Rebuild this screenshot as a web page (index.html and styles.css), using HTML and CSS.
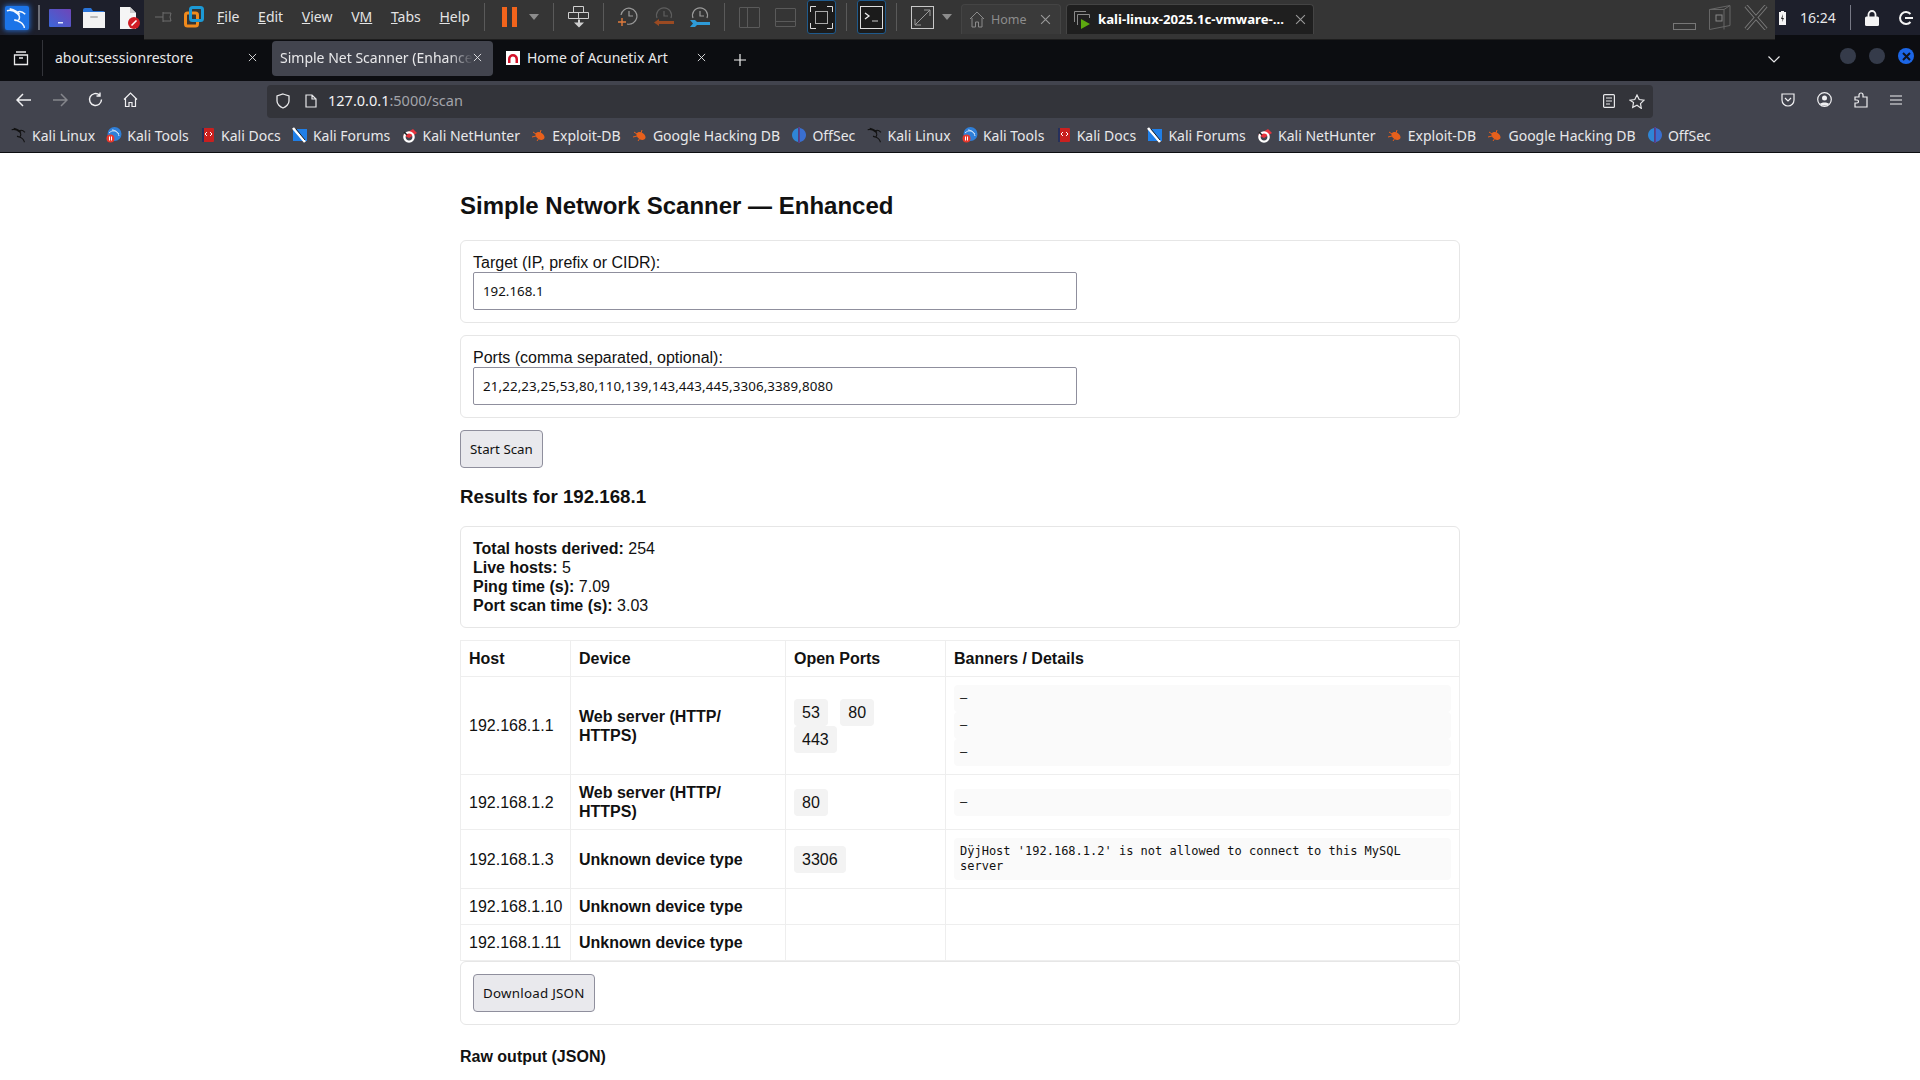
FILE: index.html
```html
<!DOCTYPE html>
<html lang="en">
  <head>
    <meta charset="UTF-8" />
    <title>Simple Net Scanner (Enhanced)</title>
    <link rel="stylesheet" href="styles.css">
  </head>
  <body>
    <svg class="sprites" aria-hidden="true">
      <symbol id="dragon" viewBox="0 0 24 24">
        <path d="M1 4c4-1 8 0 11 3 3 2 3 5 2 7-1 1-3 1-5 0M4 2c4 1 8 2 11 6M9 14c4 1 8 2 10 6 1 1 1 2 1 3M12 6c3-2 6-1 9 2" fill="none" stroke="currentColor" stroke-width="1.6"/>
      </symbol>
      <symbol id="bm-tools" viewBox="0 0 16 16">
        <circle cx="8.5" cy="7" r="7" fill="#2f7fd8"/>
        <path d="M3 6c3-3 7-3 10 1M6 3c3 0 6 2 7 6" fill="none" stroke="#cfe4fa" stroke-width="1"/>
        <circle cx="4.5" cy="11.5" r="4" fill="#e8382c"/>
        <rect x="3" y="9.5" width="1" height="4" fill="#fff"/><rect x="5" y="9.5" width="1" height="4" fill="#fff"/>
      </symbol>
      <symbol id="bm-docs" viewBox="0 0 16 16">
        <rect x="2" y="1" width="12" height="14" rx="1" fill="#c9201f"/>
        <rect x="2" y="1" width="2" height="14" fill="#26305c"/>
        <path d="M7 5l-2 2 2 2M10 5l2 2-2 2" fill="none" stroke="#fff" stroke-width="1"/>
      </symbol>
      <symbol id="bm-forums" viewBox="0 0 16 16">
        <rect x="1" y="2" width="14" height="12" fill="#1f7fe8"/>
        <path d="M1 1l12 14" stroke="#fff" stroke-width="2.6"/>
        <path d="M4 2l9 11" stroke="#222" stroke-width="1"/>
      </symbol>
      <symbol id="bm-hunter" viewBox="0 0 16 16">
        <path d="M1 8l10-6 4 4-8 5z" fill="#e5333c"/>
        <circle cx="7" cy="10" r="4.6" fill="none" stroke="#fff" stroke-width="2.4"/>
        <path d="M2 5l3 3" stroke="#222" stroke-width="1.4"/>
      </symbol>
      <symbol id="bm-exploit" viewBox="0 0 16 16">
        <ellipse cx="9" cy="9" rx="5" ry="3.4" transform="rotate(35 9 9)" fill="#e8601c"/>
        <path d="M2 5l3 2M1 10l4-1M6 14l2-3M10 3l-1 3" stroke="#e8601c" stroke-width="1"/>
      </symbol>
      <symbol id="bm-offsec" viewBox="0 0 16 16">
        <path d="M7 1C3 2 1 5 1 8s2 6 6 7z" fill="#2f86d6"/>
        <path d="M9 1c4 1 6 4 6 7s-2 6-6 7z" fill="#3a6fd0"/>
        <path d="M7.6 0h1v16h-1z" fill="#6b3fc4"/>
      </symbol>
      <symbol id="close" viewBox="0 0 10 10">
        <path d="M1 1l8 8M9 1l-8 8" fill="none" stroke="currentColor" stroke-width="1"/>
      </symbol>
      <symbol id="caret" viewBox="0 0 10 6">
        <path d="M0 0h10L5 6z" fill="currentColor"/>
      </symbol>
    </svg>

    <!-- desktop panel + vmware toolbar -->
    <header class="topbar">
      <div class="panel">
        <div class="panel__kali">
          <svg width="22" height="22"><use href="#dragon"/></svg>
        </div>
        <span class="panel__sep"></span>
        <svg class="panel__app" width="22" height="18" viewBox="0 0 22 18">
          <defs><linearGradient id="term" x1="0" y1="1" x2="1" y2="0"><stop offset="0" stop-color="#3c67d8"/><stop offset="1" stop-color="#6f45b8"/></linearGradient></defs>
          <rect width="22" height="18" rx="1" fill="url(#term)"/>
          <rect x="9" y="13" width="5" height="1.5" fill="#dfe6ff"/>
        </svg>
        <svg class="panel__app" width="22" height="20" viewBox="0 0 22 20">
          <path d="M0 2q0-2 2-2h6l2 3h10q2 0 2 2v2H0z" fill="#2a74d8"/>
          <rect y="4" width="22" height="16" fill="#f2f2f2"/>
          <rect x="7" y="8" width="8" height="2" rx="1" fill="#bbb"/>
        </svg>
        <svg class="panel__doc" width="22" height="24" viewBox="0 0 22 24">
          <path d="M1 1h10l6 6v16H1z" fill="#f5f5f5"/>
          <path d="M11 1l6 6h-6z" fill="#ccc"/>
          <circle cx="15" cy="17" r="6" fill="#d01c24"/>
          <path d="M12.5 19.5l5-5" stroke="#fff" stroke-width="1.6"/>
        </svg>
      </div>

      <div class="vm">
        <svg class="vm__pin" width="19" height="14" viewBox="0 0 19 14">
          <path d="M0 7h8M8 2v10M8 3h8l-1 4 1 4H8" fill="none" stroke="#6d6d6d" stroke-width="1"/>
        </svg>
        <svg class="vm__logo" width="20" height="22" viewBox="0 0 20 22">
          <rect x="1.5" y="7" width="12" height="13" rx="2" fill="none" stroke="#f08a1c" stroke-width="3"/>
          <rect x="6.5" y="1.5" width="12" height="13" rx="2" fill="none" stroke="#1c9ad6" stroke-width="3"/>
        </svg>
        <nav class="vm__menu">
          <span><u>F</u>ile</span>
          <span><u>E</u>dit</span>
          <span><u>V</u>iew</span>
          <span>V<u>M</u></span>
          <span><u>T</u>abs</span>
          <span><u>H</u>elp</span>
        </nav>
        <span class="vm__sep"></span>
        <div class="vm__group vm__group--pause">
          <div class="pause"><i></i><i></i></div>
          <svg class="caret" width="10" height="6"><use href="#caret"/></svg>
        </div>
        <span class="vm__sep"></span>
        <svg width="21" height="22" viewBox="0 0 21 22">
          <path d="M5.500.5h10v6h-10zM.5 6.500h20v6H.5zM10.500 6.500v6" fill="none" stroke="#cfcfcf" stroke-width="1"/>
          <path d="M12 13.500v3h4l-5 5-5-5h4v-3z" fill="#cfcfcf"/>
        </svg>
        <span class="vm__sep"></span>
        <div class="vm__group vm__group--clocks">
          <svg width="20" height="22" viewBox="0 0 20 22">
            <path d="M3 9a8 8 0 1 1 6 9" fill="none" stroke="#9a9a9a" stroke-width="1.2"/>
            <path d="M11 5v5h4" fill="none" stroke="#9a9a9a" stroke-width="1.2"/>
            <path d="M4 12v8M0 16h8" stroke="#e07b3c" stroke-width="1.4"/>
          </svg>
          <svg width="20" height="22" viewBox="0 0 20 22">
            <path d="M3 12a7.500 7.500 0 1 1 14 0" fill="none" stroke="#5e5e5e" stroke-width="1.2"/>
            <path d="M10 5v5h4" fill="none" stroke="#5e5e5e" stroke-width="1.2"/>
            <path d="M5 13v2h15v3H5v2l-5-3.500z" fill="#9a4a22"/>
          </svg>
          <svg width="20" height="22" viewBox="0 0 20 22">
            <path d="M3 12a7.500 7.500 0 1 1 14 0" fill="none" stroke="#9a9a9a" stroke-width="1.2"/>
            <path d="M10 5v5h4" fill="none" stroke="#9a9a9a" stroke-width="1.2"/>
            <path d="M0 14h5l2 2h13v3H7l-2 2H0l3-3.500z" fill="#2e9bd8"/>
          </svg>
        </div>
        <span class="vm__sep"></span>
        <div class="vm__group vm__group--split">
          <svg width="21" height="21" viewBox="0 0 21 21"><path d="M1 .5h19a.5.5 0 0 1 .5.5v19a.5.5 0 0 1-.5.5H1a.5.5 0 0 1-.5-.5V1A.5.5 0 0 1 1 .5zM8.500 1v19" fill="none" stroke="#5a5a5a"/></svg>
          <svg width="21" height="19" viewBox="0 0 21 19"><path d="M1 .5h19a.5.5 0 0 1 .5.5v17a.5.5 0 0 1-.5.5H1a.5.5 0 0 1-.5-.5V1A.5.5 0 0 1 1 .5zM1 13.500h19" fill="none" stroke="#5a5a5a"/></svg>
          <div class="vm__btn">
            <svg width="23" height="23" viewBox="0 0 23 23"><path d="M6 .5H.5V6M17 .5h5.500V6M6 22.500H.5V17M17 22.500h5.500V17" fill="none" stroke="#ddd"/><rect x="5.500" y="5.500" width="12" height="12" fill="none" stroke="#aaa"/></svg>
          </div>
        </div>
        <span class="vm__sep vm__sep--tight"></span>
        <div class="vm__btn">
          <svg width="23" height="23" viewBox="0 0 23 23"><rect x=".5" y=".5" width="22" height="22" fill="none" stroke="#ddd"/><path d="M5 7l4 3-4 3" fill="none" stroke="#eee" stroke-width="1.3"/><path d="M12 15h6" stroke="#ccc"/></svg>
        </div>
        <span class="vm__sep vm__sep--tight"></span>
        <div class="vm__group vm__group--stretch">
          <svg width="23" height="23" viewBox="0 0 23 23"><rect x=".5" y=".5" width="22" height="22" fill="none" stroke="#c8c8c8"/><path d="M4 19L19 4M13 4h6v6M4 13v6h6" fill="none" stroke="#9a9a9a"/></svg>
          <svg class="caret" width="10" height="6"><use href="#caret"/></svg>
        </div>
        <div class="vm__tabs">
          <div class="vm-tab">
            <svg width="16" height="17" viewBox="0 0 16 17"><path d="M1 8l7-7 7 7M3 7v9h3.500v-5h3v5H13V7" fill="none" stroke="#8a8a8a"/></svg>
            <span class="vm-tab__name">Home</span>
            <svg class="vm-tab__x" width="11" height="11"><use href="#close"/></svg>
          </div>
          <div class="vm-tab vm-tab--active">
            <svg width="18" height="18" viewBox="0 0 18 18"><path d="M.5 11V.5H12M3.500 14V3.500H15.500V7" fill="none" stroke="#8a8a8a"/><path d="M7 8l9 5-9 5z" fill="#5da810"/></svg>
            <span class="vm-tab__name">kali-linux-2025.1c-vmware-...</span>
            <svg class="vm-tab__x" width="11" height="11"><use href="#close"/></svg>
          </div>
        </div>
        <div class="vm__win">
          <svg width="23" height="7" viewBox="0 0 23 7"><rect x=".5" y=".5" width="22" height="6" fill="none" stroke="#777"/></svg>
          <svg width="22" height="25" viewBox="0 0 22 25"><path d="M.5 4.500L21 .5v20l-20.500 4zM.5 4.500L15 4.500 21 .5M15 4.500v20" fill="none" stroke="#666"/><rect x="7" y="10" width="6" height="6" fill="none" stroke="#888"/></svg>
          <svg width="24" height="25" viewBox="0 0 24 25"><path d="M2 1l20 23M22 1L2 24" fill="none" stroke="#7a7a7a" stroke-width="4"/><path d="M2 1l20 23M22 1L2 24" fill="none" stroke="#353535" stroke-width="2"/></svg>
        </div>
      </div>

      <div class="tray">
        <svg width="7" height="14" viewBox="0 0 7 14"><path d="M2 0h3v1h2v13H0V1h2z" fill="#f4f4f4"/><path d="M4 3L2 8h1.500L3 11l2-4H3.500z" fill="#222"/></svg>
        <span class="tray__clock">16:24</span>
        <span class="tray__sep"></span>
        <svg width="14" height="16" viewBox="0 0 14 16"><path d="M3.500 7V4.500a3.500 3.500 0 0 1 7 0V7" fill="none" stroke="#f4f4f4" stroke-width="1.800"/><rect y="6.500" width="14" height="9.500" rx="1.500" fill="#f4f4f4"/></svg>
        <svg width="14" height="14" viewBox="0 0 14 14"><path d="M11.500 3a6 6 0 1 0 0 8" fill="none" stroke="#f4f4f4" stroke-width="2"/><path d="M6 7h8" stroke="#f4f4f4" stroke-width="2"/></svg>
      </div>
    </header>

    <!-- firefox tabs -->
    <div class="tabstrip">
      <div class="tabstrip__view">
        <svg width="16" height="16" viewBox="0 0 16 16"><path d="M3 2h10M1.500 5h13v9.500h-13zM6 8h4" fill="none" stroke="#e8e8ea" stroke-width="1.300"/></svg>
      </div>
      <div class="tab tab--first">
        <span class="tab__name">about:sessionrestore</span>
        <svg class="tab__x" width="9" height="9"><use href="#close"/></svg>
      </div>
      <div class="tab tab--active">
        <span class="tab__name">Simple Net Scanner (Enhance</span>
        <svg class="tab__x" width="9" height="9"><use href="#close"/></svg>
      </div>
      <div class="tab tab--third">
        <svg width="14" height="14" viewBox="0 0 14 14"><rect width="14" height="14" fill="#fff"/><path d="M2 12V8a5 5 0 0 1 10 0v4H9.500V8a2.500 2.500 0 0 0-5 0v4z" fill="#d3122a"/></svg>
        <span class="tab__name">Home of Acunetix Art</span>
        <svg class="tab__x" width="9" height="9"><use href="#close"/></svg>
      </div>
      <svg class="tabstrip__plus" width="12" height="12" viewBox="0 0 12 12"><path d="M6 0v12M0 6h12" stroke="#f0f0f0" stroke-width="1.200"/></svg>
      <svg class="tabstrip__more" width="12" height="7" viewBox="0 0 12 7"><path d="M.5.500L6 6 11.500.5" fill="none" stroke="#e8e8ea" stroke-width="1.200"/></svg>
      <div class="wm">
        <span class="wm__dot"></span>
        <span class="wm__dot"></span>
        <span class="wm__dot wm__dot--close">
          <svg width="9" height="9" viewBox="0 0 9 9"><path d="M1 1l7 7M8 1L1 8" stroke="#10131c" stroke-width="2"/></svg>
        </span>
      </div>
    </div>

    <!-- firefox nav bar -->
    <div class="navbar">
      <div class="navbar__btns">
        <svg width="16" height="14" viewBox="0 0 16 14"><path d="M7 1L1 7l6 6M1 7h14" fill="none" stroke="#f0f0f2" stroke-width="1.500"/></svg>
        <svg width="16" height="14" viewBox="0 0 16 14"><path d="M9 1l6 6-6 6M15 7H1" fill="none" stroke="#85868c" stroke-width="1.500"/></svg>
        <svg width="15" height="15" viewBox="0 0 15 15"><path d="M13.500 7.500a6 6 0 1 1-2-4.500M12 .5V4H8.500" fill="none" stroke="#f0f0f2" stroke-width="1.400"/></svg>
        <svg width="15" height="15" viewBox="0 0 15 15"><path d="M1 7.500L7.500 1 14 7.500M2.500 6.500v8h3.500v-4h3v4h3.500v-8" fill="none" stroke="#f0f0f2" stroke-width="1.200"/></svg>
      </div>
      <div class="urlbar">
        <svg width="14" height="16" viewBox="0 0 14 16"><path d="M7 1l6 2v5c0 3-3 6-6 7-3-1-6-4-6-7V3z" fill="none" stroke="#e8e8ea" stroke-width="1.300"/></svg>
        <svg class="urlbar__page" width="12" height="14" viewBox="0 0 12 14"><path d="M1 1h6l4 4v8H1zM7 1v4h4" fill="none" stroke="#e8e8ea" stroke-width="1.200"/></svg>
        <span class="urlbar__text">127.0.0.1<span class="urlbar__dim">:5000/scan</span></span>
        <svg class="urlbar__reader" width="12" height="14" viewBox="0 0 12 14"><rect x=".6" y=".6" width="10.800" height="12.800" rx="1" fill="none" stroke="#e8e8ea" stroke-width="1.200"/><path d="M3 4h6M3 7h6M3 10h4" stroke="#e8e8ea"/></svg>
        <svg width="16" height="15" viewBox="0 0 16 15"><path d="M8 1l2.200 4.500 4.800.7-3.500 3.400.8 4.800L8 11.200l-4.300 2.200.8-4.800L1 6.200l4.800-.7z" fill="none" stroke="#e8e8ea" stroke-width="1.200"/></svg>
      </div>
      <div class="navbar__tools">
        <svg width="14" height="14" viewBox="0 0 14 14"><path d="M1 1h12v6a6 6 0 0 1-12 0z" fill="none" stroke="#f0f0f2" stroke-width="1.200"/><path d="M4 5l3 3 3-3" fill="none" stroke="#f0f0f2" stroke-width="1.200"/></svg>
        <svg width="15" height="15" viewBox="0 0 15 15"><circle cx="7.500" cy="7.500" r="6.800" fill="none" stroke="#f0f0f2" stroke-width="1.200"/><circle cx="7.500" cy="6" r="2.500" fill="#f0f0f2"/><path d="M3 12c1-2 8-2 9 0-2 2-7 2-9 0z" fill="#f0f0f2"/></svg>
        <svg width="14" height="16" viewBox="0 0 14 16"><path d="M1 5h4V3a2 2 0 0 1 4 0v2h4v10H1v-4h2a1.500 1.500 0 0 0 0-3H1z" fill="none" stroke="#f0f0f2" stroke-width="1.200"/></svg>
        <svg width="12" height="10" viewBox="0 0 12 10"><path d="M0 1h12M0 5h12M0 9h12" stroke="#f0f0f2" stroke-width="1.200"/></svg>
      </div>
    </div>

    <!-- bookmarks -->
    <div class="bookmarks">
      <span class="bm"><svg class="bm__dark" width="16" height="16"><use href="#dragon"/></svg>Kali Linux</span>
      <span class="bm"><svg width="16" height="16"><use href="#bm-tools"/></svg>Kali Tools</span>
      <span class="bm"><svg width="16" height="16"><use href="#bm-docs"/></svg>Kali Docs</span>
      <span class="bm"><svg width="16" height="16"><use href="#bm-forums"/></svg>Kali Forums</span>
      <span class="bm"><svg width="16" height="16"><use href="#bm-hunter"/></svg>Kali NetHunter</span>
      <span class="bm"><svg width="16" height="16"><use href="#bm-exploit"/></svg>Exploit-DB</span>
      <span class="bm"><svg width="16" height="16"><use href="#bm-exploit"/></svg>Google Hacking DB</span>
      <span class="bm"><svg width="16" height="16"><use href="#bm-offsec"/></svg>OffSec</span>
      <span class="bm"><svg class="bm__dark" width="16" height="16"><use href="#dragon"/></svg>Kali Linux</span>
      <span class="bm"><svg width="16" height="16"><use href="#bm-tools"/></svg>Kali Tools</span>
      <span class="bm"><svg width="16" height="16"><use href="#bm-docs"/></svg>Kali Docs</span>
      <span class="bm"><svg width="16" height="16"><use href="#bm-forums"/></svg>Kali Forums</span>
      <span class="bm"><svg width="16" height="16"><use href="#bm-hunter"/></svg>Kali NetHunter</span>
      <span class="bm"><svg width="16" height="16"><use href="#bm-exploit"/></svg>Exploit-DB</span>
      <span class="bm"><svg width="16" height="16"><use href="#bm-exploit"/></svg>Google Hacking DB</span>
      <span class="bm"><svg width="16" height="16"><use href="#bm-offsec"/></svg>OffSec</span>
    </div>

    <!-- the scanner page -->
    <main class="page">
      <h1>Simple Network Scanner — Enhanced</h1>
      <form>
        <div class="card">
          <label for="target">Target (IP, prefix or CIDR):</label>
          <input id="target" class="field" type="text" value="192.168.1">
        </div>
        <div class="card">
          <label for="ports">Ports (comma separated, optional):</label>
          <input id="ports" class="field field--ports" type="text" value="21,22,23,25,53,80,110,139,143,443,445,3306,3389,8080">
        </div>
        <button class="btn" type="button">Start Scan</button>
      </form>

      <h3>Results for 192.168.1</h3>
      <div class="card">
        <div><strong>Total hosts derived:</strong> 254</div>
        <div><strong>Live hosts:</strong> 5</div>
        <div><strong>Ping time (s):</strong> 7.09</div>
        <div><strong>Port scan time (s):</strong> 3.03</div>
      </div>

      <table class="results">
        <colgroup>
          <col class="results__host">
          <col class="results__device">
          <col class="results__ports">
          <col>
        </colgroup>
        <thead>
          <tr><th>Host</th><th>Device</th><th>Open Ports</th><th>Banners / Details</th></tr>
        </thead>
        <tbody>
          <tr>
            <td>192.168.1.1</td>
            <td><strong>Web server (HTTP/<br>HTTPS)</strong></td>
            <td><span class="port">53</span> <span class="port">80</span> <span class="port">443</span></td>
            <td><pre>–</pre><pre>–</pre><pre>–</pre></td>
          </tr>
          <tr>
            <td>192.168.1.2</td>
            <td><strong>Web server (HTTP/<br>HTTPS)</strong></td>
            <td><span class="port">80</span></td>
            <td><pre>–</pre></td>
          </tr>
          <tr>
            <td>192.168.1.3</td>
            <td><strong>Unknown device type</strong></td>
            <td><span class="port">3306</span></td>
            <td><pre>DÿjHost '192.168.1.2' is not allowed to connect to this MySQL server</pre></td>
          </tr>
          <tr>
            <td>192.168.1.10</td>
            <td><strong>Unknown device type</strong></td>
            <td></td>
            <td></td>
          </tr>
          <tr>
            <td>192.168.1.11</td>
            <td><strong>Unknown device type</strong></td>
            <td></td>
            <td></td>
          </tr>
        </tbody>
      </table>

      <div class="card card--flush">
        <button class="btn btn--wide" type="button">Download JSON</button>
      </div>

      <h4>Raw output (JSON)</h4>
    </main>
  </body>
</html>
```

FILE: styles.css
```css
:root {
  --panel: #1d1f2b;
  --vm: #353535;
  --strip: #0c0d11;
  --chrome: #42444e;
  --url: #33343a;
  --ui-text: #e8e8ea;
  --line: #eeeeee;
}

html,
body {
  height: 100%;
}

body {
  margin: 0;
  overflow: hidden;
  background: #ffffff;
  color: #111111;
  font-family: "Liberation Sans", Arial, sans-serif;
  font-size: 16px;
  line-height: 19px;
}

.sprites {
  display: none;
}

svg {
  flex: none;
  display: block;
}

/* top bar */

.topbar {
  display: flex;
  align-items: flex-start;
  height: 40px;
  background: var(--strip);
  font-family: "Noto Sans", sans-serif;
  font-size: 14px;
}

.panel {
  display: flex;
  align-items: center;
  width: 144px;
  height: 35px;
  flex: none;
  background: var(--panel);
  padding-left: 5px;
  box-sizing: border-box;
}

.panel__kali {
  width: 24px;
  height: 24px;
  display: flex;
  align-items: center;
  justify-content: center;
  background: #1c74e8;
  border-radius: 2px;
  box-shadow: 0 0 5px 1px rgba(40, 130, 255, 0.7);
  color: #f4f8ff;
}

.panel__sep {
  width: 2px;
  height: 25px;
  margin: 0 9px;
  background: #6d6f78;
}

.panel__app {
  margin-right: 12px;
}

.panel__doc {
  margin-left: 2px;
}

.vm {
  flex: 1;
  display: flex;
  align-items: center;
  height: 40px;
  box-sizing: border-box;
  padding: 0 7px 5px 11px;
  background: var(--vm);
  border-bottom: 1px solid #1e1e1e;
  color: #dcdcdc;
}

.vm__logo {
  margin-left: 10px;
}

.vm__menu {
  display: flex;
  justify-content: space-between;
  width: 253px;
  margin: -2px 0 0 13px;
  color: #e4e4e4;
}

.vm__sep {
  width: 1px;
  height: 28px;
  margin: 0 14px;
  background: #5a5a5a;
}

.vm__sep--tight {
  margin: 0 10px;
}

.vm__group {
  display: flex;
  align-items: center;
}

.vm__group--pause {
  padding-left: 3px;
  gap: 12px;
}

.vm__group--clocks {
  gap: 16px;
}

.vm__group--split {
  gap: 15px;
}

.vm__group--split .vm__btn {
  margin-left: -4px;
}

.vm__group--stretch {
  padding-left: 4px;
  gap: 8px;
}

.pause {
  display: flex;
  gap: 5px;
}

.pause i {
  width: 5px;
  height: 20px;
  background: #f2641c;
}

.caret {
  color: #8c8c8c;
}

.vm__btn {
  width: 29px;
  height: 34px;
  box-sizing: border-box;
  display: flex;
  align-items: center;
  justify-content: center;
  background: #1b1b1b;
  border: 1px solid #1f5a8c;
  border-radius: 3px;
}

.vm__tabs {
  display: flex;
  gap: 5px;
  margin-left: 9px;
  align-self: flex-end;
}

.vm-tab {
  display: flex;
  align-items: center;
  width: 100px;
  height: 30px;
  box-sizing: border-box;
  padding: 0 9px 0 7px;
  background: #3a3a3a;
  border: 1px solid #444444;
  border-bottom: 0;
  border-radius: 4px 4px 0 0;
  color: #8d8d8d;
  font-size: 12.5px;
}

.vm-tab__name {
  margin-left: 6px;
  flex: 1;
  white-space: nowrap;
}

.vm-tab__x {
  color: #9a9a9a;
}

.vm-tab--active {
  width: 248px;
  padding-right: 7px;
  background: #1f1f1f;
  color: #ffffff;
  font-size: 13.2px;
  font-weight: 700;
}

.vm__win {
  display: flex;
  align-items: flex-end;
  gap: 13px;
  margin-left: auto;
}

.tray {
  display: flex;
  align-items: center;
  width: 145px;
  height: 35px;
  flex: none;
  box-sizing: border-box;
  padding-left: 4px;
  background: var(--panel);
  color: var(--ui-text);
}

.tray__clock {
  margin-left: 14px;
  font-size: 14px;
}

.tray__sep {
  width: 1px;
  height: 25px;
  margin: 0 14px;
  background: #777985;
}

.tray svg + svg {
  margin-left: 20px;
}

/* tab strip */

.tabstrip {
  display: flex;
  align-items: flex-start;
  height: 41px;
  background: var(--strip);
  color: var(--ui-text);
  font-family: "Noto Sans", sans-serif;
  font-size: 14px;
}

.tabstrip__view {
  display: flex;
  align-items: center;
  justify-content: center;
  width: 42px;
  height: 36px;
  margin-top: 0;
  border-right: 1px solid #33343a;
}

.tab {
  display: flex;
  align-items: center;
  height: 35px;
  margin-top: 1px;
  padding-bottom: 2px;
  box-sizing: border-box;
}

.tab__name {
  flex: 1;
  white-space: nowrap;
}

.tab--first {
  width: 229px;
  padding-left: 12px;
  padding-right: 15px;
}

.tab--active {
  width: 221px;
  padding-left: 8px;
  padding-right: 11px;
  background: var(--chrome);
  border-radius: 4px;
}

.tab--active .tab__name {
  -webkit-mask-image: linear-gradient(to left, transparent, #000 24px);
  mask-image: linear-gradient(to left, transparent, #000 24px);
}

.tab--third {
  width: 222px;
  padding-left: 13px;
  padding-right: 9px;
  gap: 7px;
}

.tabstrip__plus {
  margin: 14px 0 0 19px;
}

.tabstrip__more {
  margin: 16px 0 0 1022px;
}

.wm {
  display: flex;
  gap: 13px;
  margin: 8px 0 0 60px;
}

.wm__dot {
  display: flex;
  align-items: center;
  justify-content: center;
  width: 16px;
  height: 16px;
  border-radius: 50%;
  background: #353b4a;
}

.wm__dot--close {
  background: #1c66e6;
}

/* nav bar */

.navbar {
  display: flex;
  align-items: center;
  height: 37px;
  background: var(--chrome);
  color: var(--ui-text);
  font-family: "Noto Sans", sans-serif;
}

.navbar__btns {
  display: flex;
  align-items: center;
  gap: 20px;
  width: 267px;
  padding-left: 16px;
  box-sizing: border-box;
}

.urlbar {
  display: flex;
  align-items: center;
  width: 1386px;
  height: 33px;
  margin-top: 3px;
  box-sizing: border-box;
  padding: 0 8px 0 9px;
  background: var(--url);
  border-radius: 4px;
  font-size: 14.5px;
}

.urlbar__page {
  margin-left: 15px;
}

.urlbar__text {
  flex: 1;
  margin: 0 0 2px 11px;
  color: #f2f2f4;
}

.urlbar__dim {
  color: #a3a4aa;
}

.urlbar__reader {
  margin-right: 14px;
}

.navbar__tools {
  display: flex;
  align-items: center;
  gap: 22px;
  margin-left: 128px;
}

/* bookmarks */

.bookmarks {
  display: flex;
  align-items: center;
  gap: 11.3px;
  height: 34px;
  padding-left: 11px;
  background: var(--chrome);
  border-bottom: 1px solid #0c0d11;
  box-sizing: content-box;
  color: var(--ui-text);
  font-family: "Noto Sans", sans-serif;
  font-size: 14px;
}

.bm {
  display: flex;
  align-items: center;
  gap: 5px;
  white-space: nowrap;
}

.bm__dark {
  color: #111111;
}

/* page content */

.page {
  width: 1000px;
  margin: 0 auto;
  padding-top: 39px;
}

h1 {
  margin: 0 0 20px;
  font-size: 24px;
  line-height: 28px;
}

h3 {
  margin: 18px 0;
  font-size: 18.72px;
  line-height: 22px;
}

h4 {
  margin: 22px 0;
  font-size: 16px;
}

.card {
  margin-bottom: 12px;
  padding: 12px;
  border: 1px solid #e6e6e6;
  border-radius: 6px;
}

.card--flush {
  margin-bottom: 0;
}

label {
  display: block;
}

.field {
  display: block;
  width: 604px;
  height: 38px;
  box-sizing: border-box;
  padding: 0 9px;
  border: 1px solid #8f8f9d;
  border-radius: 2px;
  background: #ffffff;
  color: #111111;
  font-family: "Noto Sans", sans-serif;
  font-size: 13.33px;
}

.field--ports {
  letter-spacing: 0.12px;
}

.btn {
  display: block;
  padding: 8px 9px;
  border: 1px solid #8f8f9d;
  border-radius: 4px;
  background: #e9e9ed;
  color: #111111;
  font-family: "Noto Sans", sans-serif;
  font-size: 13.33px;
  line-height: 20px;
}

.btn--wide {
  letter-spacing: 0.25px;
}

.results {
  width: 1000px;
  table-layout: fixed;
  border-collapse: collapse;
}

.results__host {
  width: 110px;
}

.results__device {
  width: 215px;
}

.results__ports {
  width: 160px;
}

.results th,
.results td {
  padding: 8px;
  border: 1px solid var(--line);
  text-align: left;
  vertical-align: middle;
}

.port {
  display: inline-block;
  padding: 4px 8px;
  margin-right: 8px;
  border-radius: 4px;
  background: #f3f3f3;
}

pre {
  margin: 0;
  padding: 6px;
  border-radius: 4px;
  background: #fafafa;
  font-family: "DejaVu Sans Mono", monospace;
  font-size: 12px;
  line-height: 15px;
  white-space: pre-wrap;
}
```
